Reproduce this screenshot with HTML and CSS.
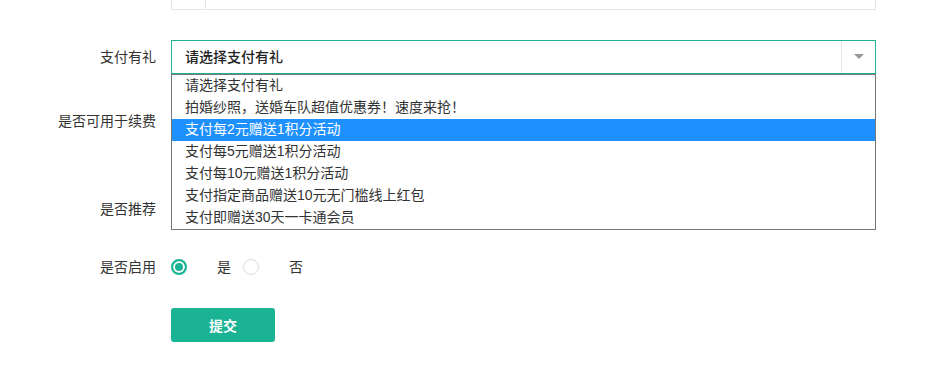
FILE: index.html
```html
<!DOCTYPE html>
<html>
<head>
  <meta charset="UTF-8">
  <title>支付有礼设置</title>
  <link rel="stylesheet" href="styles.css">
</head>
<body>
  <form class="form">
    <!-- previous field, scrolled partly out of view -->
    <div class="form-row row-top">
      <label class="row-label"></label>
      <div class="input-group">
        <span class="addon"></span>
        <span class="field"></span>
      </div>
    </div>

    <!-- Pay gift select, opened -->
    <div class="form-row row-select">
      <label class="row-label">支付有礼</label>
      <div class="select-wrap">
        <div class="select-box">
          <span class="select-text">请选择支付有礼</span>
          <span class="select-arrow"><i class="caret"></i></span>
        </div>
        <ul class="select-list">
          <li>请选择支付有礼</li>
          <li>拍婚纱照，送婚车队超值优惠券！速度来抢！</li>
          <li class="active">支付每2元赠送1积分活动</li>
          <li>支付每5元赠送1积分活动</li>
          <li>支付每10元赠送1积分活动</li>
          <li>支付指定商品赠送10元无门槛线上红包</li>
          <li>支付即赠送30天一卡通会员</li>
        </ul>
      </div>
    </div>

    <div class="form-row row-renew">
      <label class="row-label">是否可用于续费</label>
      <div class="radio-group"></div>
    </div>

    <div class="form-row row-recommend">
      <label class="row-label">是否推荐</label>
      <div class="radio-group"></div>
    </div>

    <div class="form-row row-enable">
      <label class="row-label">是否启用</label>
      <div class="radio-group">
        <label class="radio-item"><span class="radio checked"></span>是</label>
        <label class="radio-item"><span class="radio"></span>否</label>
      </div>
    </div>

    <div class="form-row row-submit">
      <span class="row-label"></span>
      <div><button type="button" class="btn-submit">提交</button></div>
    </div>
  </form>
</body>
</html>
```

FILE: styles.css
```css
* { box-sizing: border-box; }
body {
  margin: 0;
  font-family: "Liberation Sans", "Noto Sans CJK SC", sans-serif;
  font-size: 14px;
  color: #333;
  background: #fff;
  overflow: hidden;
}
.form {
  display: flex;
  flex-direction: column;
}
.form-row {
  display: grid;
  grid-template-columns: 156px 705px;
  column-gap: 15px;
  align-items: center;
  height: 34px;
}
.row-label {
  text-align: right;
  line-height: 20px;
}
/* spacing between rows */
.row-top { margin-top: -24px; }
.row-select { margin-top: 30px; }
.row-renew { margin-top: 30px; }
.row-recommend { margin-top: 54px; }
.row-enable { margin-top: 24px; }
.row-submit { margin-top: 24px; }

/* top input group */
.input-group {
  display: flex;
  height: 34px;
  border: 1px solid #e5e6e7;
}
.addon {
  width: 34px;
  border-right: 1px solid #e5e6e7;
}
.field { flex: 1; }

/* select */
.select-wrap {
  position: relative;
  height: 34px;
}
.select-box {
  display: flex;
  height: 34px;
  border: 1px solid #1ab394;
  background: #fff;
}
.select-text {
  flex: 1;
  padding-left: 13px;
  line-height: 32px;
  color: #222;
  font-weight: 500;
}
.select-arrow {
  width: 34px;
  border-left: 1px solid #e5e5e5;
  display: flex;
  align-items: center;
  justify-content: center;
}
.caret {
  width: 0;
  height: 0;
  border-left: 5px solid transparent;
  border-right: 5px solid transparent;
  border-top: 5px solid #999;
  margin-top: -1px;
}
.select-list {
  position: absolute;
  top: 34px;
  left: 0;
  right: 0;
  margin: 0;
  padding: 0;
  list-style: none;
  background: #fff;
  border: 1px solid #767676;
  z-index: 10;
}
.select-list li {
  height: 22px;
  line-height: 21px;
  padding-left: 13px;
  color: #333;
}
.select-list li.active {
  background: #1e90ff;
  color: #fff;
}

/* radios */
.radio-group {
  display: flex;
  align-items: center;
}
.radio-item {
  display: flex;
  align-items: center;
  gap: 30px;
  margin-right: 12px;
  line-height: 20px;
}
.radio {
  width: 16px;
  height: 16px;
  border-radius: 50%;
  border: 1px solid #ddd;
  background: #fff;
}
.radio.checked {
  border: 2px solid #1ab394;
  box-shadow: inset 0 0 0 2px #fff;
  background: #1ab394;
}

/* submit */
.btn-submit {
  width: 104px;
  height: 34px;
  border: none;
  border-radius: 3px;
  background: #1ab394;
  color: #fff;
  font-family: inherit;
  font-size: 14px;
  font-weight: bold;
  cursor: pointer;
}
```
